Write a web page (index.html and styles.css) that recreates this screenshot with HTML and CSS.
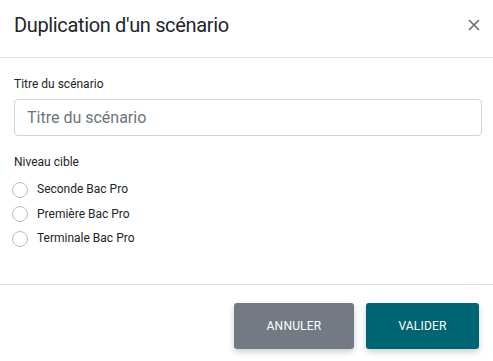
FILE: index.html
```html
<!DOCTYPE html>
<html lang="fr">
<head>
<meta charset="utf-8">
<link rel="stylesheet" href="styles.css">
</head>
<body>
<div class="modal">
  <div class="header">
    <h1 class="title">Duplication d'un scénario</h1>
    <button class="close" aria-label="Fermer">
      <svg width="12" height="12" viewBox="0 0 12 12"><path d="M1.5 1.5 L10.5 10.5 M10.5 1.5 L1.5 10.5" stroke="#6c6f73" stroke-width="1.7" stroke-linecap="round"/></svg>
    </button>
  </div>
  <div class="body">
    <label class="label" for="t">Titre du scénario</label>
    <input id="t" class="input" type="text" placeholder="Titre du scénario">
    <div class="label level">Niveau cible</div>
    <div class="radios">
      <label class="radio"><span class="circle"></span>Seconde Bac Pro</label>
      <label class="radio"><span class="circle"></span>Première Bac Pro</label>
      <label class="radio"><span class="circle"></span>Terminale Bac Pro</label>
    </div>
  </div>
  <div class="footer">
    <button class="btn cancel">ANNULER</button>
    <button class="btn ok">VALIDER</button>
  </div>
</div>
</body>
</html>
```
FILE: styles.css
```css
* { box-sizing: border-box; }
html, body { margin: 0; padding: 0; background: #fff; }
body { font-family: Roboto, "Liberation Sans", sans-serif; color: #212529; width: 493px; height: 361px; overflow: hidden; }
.modal { width: 496px; }
.header { height: 58px; display: flex; align-items: center; justify-content: space-between; padding: 0 16px 8px 14px; border-bottom: 1px solid #dee2e6; }
.title { margin: 0; font-size: 20px; font-weight: 400; letter-spacing: -0.35px; color: #212529; }
.close { border: 0; background: none; padding: 0; width: 12px; height: 12px; display: flex; }
.body { padding: 18px 14px 0 14px; height: 227px; border-bottom: 1px solid #dee2e6; }
.label { display: block; font-size: 12px; line-height: 16px; color: #212529; }
.input { display: block; width: 468px; height: 37px; margin-top: 7px; border: 1px solid #ced4da; border-radius: 4px; padding: 0 12px; font-family: inherit; font-size: 16px; color: #212529; outline: none; }
.input::placeholder { color: #6c757d; }
.level { margin-top: 18px; }
.radios { margin-top: 11px; display: flex; flex-direction: column; gap: 7.5px; margin-left: -2px; }
.radio { display: flex; align-items: center; gap: 9px; font-size: 12px; line-height: 17px; color: #212529; }
.circle { width: 16px; height: 16px; border: 1px solid #b9bec4; border-radius: 50%; background: #fff; }
.footer { display: flex; justify-content: flex-end; gap: 12px; padding: 18px 17px 0 0; }
.btn { height: 46px; border: 0; border-radius: 3px; color: #fff; font-family: inherit; font-size: 12px; letter-spacing: 0.2px; box-shadow: 0 3px 6px rgba(0,0,0,0.2); }
.cancel { width: 120px; background: #737a83; }
.ok { width: 113px; background: #006572; }
```
